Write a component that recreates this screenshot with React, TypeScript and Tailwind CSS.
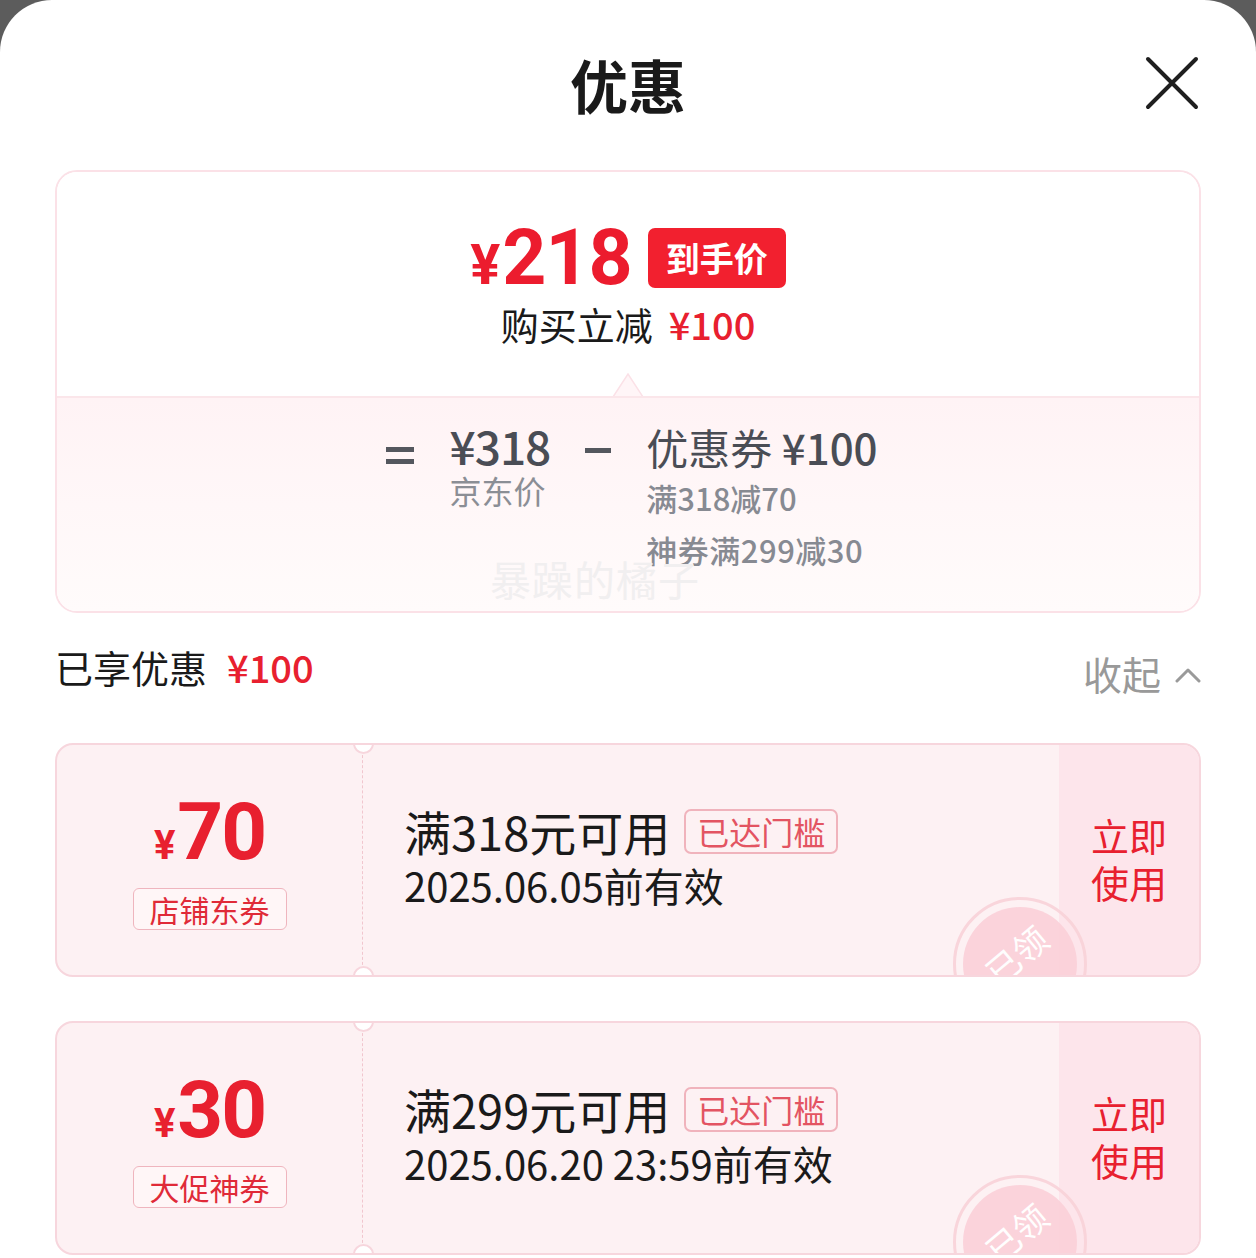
import React from 'react'

const font = { fontFamily: '"Noto Sans CJK SC", "Noto Sans", sans-serif' }

type CouponProps = {
  amount: string
  tag: string
  cond: string
  expire: string
}

// 单张优惠券
const Coupon = ({ amount, tag, cond, expire }: CouponProps) => {
  return (
    <div className="relative flex h-[234px] overflow-hidden rounded-[18px] border-2 border-[#f7d6dd] bg-[#fdf1f3]">
      {/* 左侧金额 */}
      <div className="flex w-[306px] shrink-0 flex-col items-center justify-center border-r border-dashed border-[#f1c6ce] pt-[2px]">
        <div className="flex items-baseline text-[#e8202f] font-['Roboto'] font-bold leading-none">
          <span className="text-[40px] mr-[2px]">¥</span>
          <span className="text-[80px] tracking-[-2px]">{amount}</span>
        </div>
        <div className="mt-[16px] rounded-[6px] border border-[#efb5be] bg-[#fff6f7] px-[16px] h-[42px] flex items-center text-[30px] leading-none text-[#e02a38]">
          {tag}
        </div>
      </div>

      {/* 中间说明 */}
      <div className="flex flex-1 flex-col justify-center pl-[41px] pb-[6px]">
        <div className="flex items-center">
          <span className="text-[47px] leading-[54px] text-[#1a1a1a]">{cond}</span>
          <span className="ml-[14px] h-[45px] rounded-[7px] border-2 border-[#f0b3bc] px-[11px] flex items-center text-[32px] leading-none text-[#e35462]">
            已达门槛
          </span>
        </div>
        <div className="mt-[2px] text-[40px] leading-[50px] text-[#1a1a1a]">{expire}</div>
      </div>

      {/* 右侧按钮 */}
      <div className="flex w-[140px] shrink-0 flex-col items-center justify-center bg-[#fde5eb] pb-[4px] text-[38px] leading-[47px] text-[#e8202f]">
        <span>立即</span>
        <span>使用</span>
      </div>

      {/* 已领印章 */}
      <div className="absolute left-[896px] top-[152px] h-[134px] w-[134px] rounded-full border-[3px] border-[#f9d2d9] opacity-90">
        <div className="absolute inset-[7px] rounded-full bg-[#fbd0d9] flex items-center justify-center">
          <span className="-rotate-[40deg] -translate-y-[10px] -translate-x-[4px] text-[34px] text-white">已领</span>
        </div>
      </div>

      {/* 缺口 */}
      <span className="absolute left-[296px] top-[-12px] h-[21px] w-[21px] rounded-full border-2 border-[#f7d6dd] bg-white" />
      <span className="absolute left-[296px] bottom-[-12px] h-[21px] w-[21px] rounded-full border-2 border-[#f7d6dd] bg-white" />
    </div>
  )
}

const coupons: CouponProps[] = [
  { amount: '70', tag: '店铺东券', cond: '满318元可用', expire: '2025.06.05前有效' },
  { amount: '30', tag: '大促神券', cond: '满299元可用', expire: '2025.06.20 23:59前有效' },
]

export default function App() {
  return (
    <div className="h-[1258px] w-full overflow-hidden bg-[#5c5c5c]" style={font}>
      <div className="h-full rounded-t-[52px] bg-white px-[55px]">
        {/* 标题 */}
        <div className="grid h-[170px] grid-cols-[1fr_auto_1fr] items-center">
          <div />
          <h1 className="text-[58px] font-bold leading-none text-[#1a1a1a] pb-[2px]">优惠</h1>
          <div className="flex justify-end pr-[2px] pb-[4px]">
            <svg width="54" height="54" viewBox="0 0 54 54" fill="none">
              <path d="M3 3 L51 51 M51 3 L3 51" stroke="#1f1f1f" strokeWidth="4" strokeLinecap="round" />
            </svg>
          </div>
        </div>

        {/* 到手价卡片 */}
        <div className="flex h-[443px] flex-col overflow-hidden rounded-[22px] border-2 border-[#fbe1e7]">
          <div className="relative h-[224px] shrink-0 bg-white flex flex-col items-center pt-[56px]">
            <div className="flex items-center h-[60px]">
              <div className="flex items-baseline text-[#ec1c2e] font-['Roboto'] font-bold leading-none">
                <span className="text-[56px] mr-[2px]">¥</span>
                <span className="text-[77px] tracking-[-1px]">218</span>
              </div>
              <span className="ml-[16px] h-[60px] rounded-[7px] bg-[#f2202f] px-[18px] flex items-center text-[34px] font-bold leading-none text-white">
                到手价
              </span>
            </div>
            <div className="mt-[14px] flex items-center text-[38px] leading-[44px]">
              <span className="text-[#1a1a1a]">购买立减</span>
              <span className="ml-[16px] text-[#e8202f] font-medium">¥100</span>
            </div>
            {/* 小三角 */}
            <svg className="absolute bottom-[-1px] left-1/2 -translate-x-1/2" width="32" height="24" viewBox="0 0 32 24" fill="none">
              <path d="M1 24 L16 1 L31 24 Z" fill="#fff5f7" stroke="#fbe1e7" strokeWidth="1.5" />
            </svg>
          </div>

          <div className="relative flex-1 border-t-2 border-[#fbe6ea] bg-linear-to-b from-[#fff3f5] to-[#fffbfb]">
            <div className="flex justify-center gap-[35px] pt-[22px] pl-[8px]">
              <div className="flex flex-col gap-[7px] pt-[27px]">
                <span className="block h-[5px] w-[28px] bg-[#54575e]" />
                <span className="block h-[5px] w-[28px] bg-[#54575e]" />
              </div>
              <div className="flex flex-col">
                <span className="text-[46px] leading-[50px] font-medium text-[#4a4d55] tracking-[-1px]">¥318</span>
                <span className="text-[32px] leading-[40px] text-[#8b8e95]">京东价</span>
              </div>
              <div className="pt-[28px]">
                <span className="block h-[5px] w-[26px] bg-[#54575e]" />
              </div>
              <div className="flex flex-col">
                <span className="text-[42px] leading-[54px] text-[#4a4d55]">
                  优惠券 <span className="font-medium">¥100</span>
                </span>
                <span className="mt-[2px] text-[31px] leading-[44px] font-medium text-[#878a92]">满318减70</span>
                <span className="mt-[8px] text-[31px] leading-[44px] font-medium text-[#878a92] tracking-[0.5px]">神券满299减30</span>
              </div>
            </div>
            {/* 水印 */}
            <span className="absolute left-[433px] top-[160px] text-[41px] leading-none text-[#f1eff0] tracking-[1px]">暴躁的橘子</span>
          </div>
        </div>

        {/* 已享优惠 */}
        <div className="mt-[31px] flex items-start justify-between">
          <div className="flex items-center text-[38px] leading-[46px]">
            <span className="text-[#1a1a1a]">已享优惠</span>
            <span className="ml-[20px] text-[#e8202f] font-medium">¥100</span>
          </div>
          <div className="mt-[6px] flex items-center text-[39px] leading-[46px] text-[#999999]">
            <span>收起</span>
            <svg className="ml-[14px] mt-[4px]" width="26" height="16" viewBox="0 0 26 16" fill="none">
              <path d="M2 14 L13 3 L24 14" stroke="#9a9a9a" strokeWidth="3" strokeLinecap="round" strokeLinejoin="round" />
            </svg>
          </div>
        </div>

        {/* 优惠券列表 */}
        <div className="mt-[47px] flex flex-col gap-[44px]">
          {coupons.map((c) => (
            <Coupon key={c.amount} {...c} />
          ))}
        </div>
      </div>
    </div>
  )
}
